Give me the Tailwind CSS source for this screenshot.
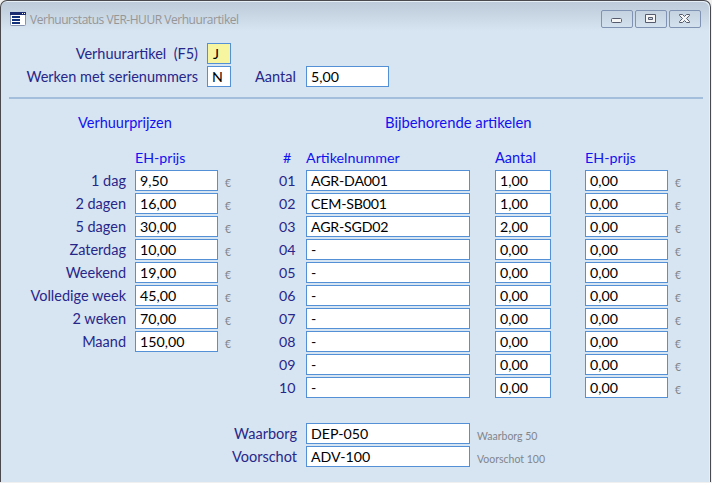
<!DOCTYPE html>
<html lang="nl">
<head>
<meta charset="utf-8">
<title>Verhuurstatus</title>
<script src="https://cdn.jsdelivr.net/npm/@tailwindcss/browser@4"></script>
</head>
<body class="w-[712px] h-[483px] overflow-hidden bg-[#f0f0f0] font-['Lato',sans-serif] text-[14.5px] leading-[21px] text-[#27278a]">
<div class="w-[711px] h-[482px] rounded-t-[7px] border border-b-0 border-[#4a4a4e] bg-[#d7e4f1] bg-linear-to-b from-[#bccad9] from-[0px] to-[#d7e4f1] to-[30px] shadow-[inset_-1px_1px_0_#e6eef6] whitespace-nowrap">
  <header class="flex h-[38px] pl-[9px] pr-[9px] pt-[9px] items-start">
    <svg class="mt-[2px]" width="16" height="14" viewBox="0 0 16 14"><rect x="0.5" y="0.5" width="15" height="13" rx="1" fill="#fff" stroke="#8792b0"/><path d="M0 0h16v3H0z" fill="#1b2c70"/><path d="M12 1h1v1h-1zM14 1h1v1h-1z" fill="#fff"/><path d="M2 4h8v2H2zM2 7h8v2H2zM2 10h8v2H2z" fill="#10307c"/></svg>
    <h1 class="ml-[4px] mt-[1px] font-['Open_Sans',sans-serif] text-[12px] leading-[18px] tracking-[-0.46px] text-[#969696]">Verhuurstatus VER-HUUR Verhuurartikel</h1>
    <div class="ml-auto flex gap-[2px]">
      <span class="w-[32px] h-[18px] rounded-[2px] border border-[#8193b3]"><svg width="30" height="16"><rect x="9.5" y="7.5" width="10" height="4" rx="1" fill="#f5f5f5" stroke="#555a6c"/></svg></span>
      <span class="w-[32px] h-[18px] rounded-[2px] border border-[#8193b3]"><svg width="30" height="16"><path fill-rule="evenodd" d="M9.5 3.5h10v8h-10zM12.5 6.500h4v2h-4z" fill="#f5f5f5" stroke="#555a6c"/></svg></span>
      <span class="w-[32px] h-[18px] rounded-[2px] border border-[#8193b3]"><svg width="30" height="16"><path d="M9.500 3.500h3l2 2 2-2h3v1l-3 3 3 3v1h-3l-2-2-2 2h-3v-1l3-3-3-3z" fill="#f5f5f5" stroke="#555a6c"/></svg></span>
    </div>
  </header>

  <section class="mt-[4px] h-[54px] ml-[8px] mr-[7px] border-b-2 border-[#a3bddc] box-content">
    <div class="flex h-[23px]"><span class="w-[189px] text-right whitespace-pre">Verhuurartikel  (F5)</span><span class="ml-[9px] w-[24px] h-[21px] border border-[#5390d6] bg-[#f8f5a0] pl-[5px] text-[14.2px] leading-[20px] text-black">J</span></div>
    <div class="flex h-[23px]"><span class="w-[189px] text-right">Werken met serienummers</span><span class="ml-[9px] w-[24px] h-[21px] border border-[#5390d6] bg-white pl-[4px] text-[14.2px] leading-[20px] text-black">N</span><span class="ml-[24px]">Aantal</span><span class="ml-auto mr-[314px] w-[83px] h-[21px] border border-[#5390d6] bg-white pl-[4px] text-[14.2px] leading-[20px] text-black">5,00</span></div>
  </section>

  <div class="flex mt-[13px] h-[35px] text-[#1212f0]"><h2 class="ml-[77px] w-[307px]">Verhuurprijzen</h2><h2 class="text-[14.8px]">Bijbehorende artikelen</h2></div>
  <main class="flex">
    <section class="w-[264px]">
      <div class="h-[23px] pl-[134px] text-[14.2px] text-[#1212f0]">EH-prijs</div>
      <div id="prices"></div>
    </section>
    <section>
      <div class="grid grid-cols-[41px_189px_90px_90px] h-[23px] text-[14.3px] text-[#1212f0]"><span class="pl-[18px]">#</span><span>Artikelnummer</span><span class="text-[14.5px]">Aantal</span><span>EH-prijs</span></div>
      <div id="articles"></div>
    </section>
  </main>
  <footer class="mt-[23px] ml-[219px]">
    <div class="flex h-[23px]"><span class="w-[77px] text-right">Waarborg</span><span class="ml-[9px] w-[164px] h-[21px] border border-[#5390d6] bg-white pl-[4px] text-[14.2px] leading-[20px] text-black">DEP-050</span><span class="ml-[7px] pt-[3px] text-[10.5px] text-[#82868c]">Waarborg 50</span></div>
    <div class="flex h-[23px]"><span class="w-[77px] text-right">Voorschot</span><span class="ml-[9px] w-[164px] h-[21px] border border-[#5390d6] bg-white pl-[4px] text-[14.2px] leading-[20px] text-black">ADV-100</span><span class="ml-[7px] pt-[3px] text-[10.5px] text-[#82868c]">Voorschot 100</span></div>
  </footer>
</div>
<script>
const field = (w, t) => `<span class="${w} h-[21px] border border-[#5390d6] bg-white pl-[4px] text-[14.2px] leading-[20px] text-black">${t}</span>`;
const euro = '<span class="ml-[7px] pt-[3px] text-[10.5px] text-[#82868c]">€</span>';
document.getElementById('prices').innerHTML = [['1 dag','9,50'],['2 dagen','16,00'],['5 dagen','30,00'],['Zaterdag','10,00'],['Weekend','19,00'],['Volledige week','45,00'],['2 weken','70,00'],['Maand','150,00']]
  .map(([l, v]) => `<div class="flex h-[23px]"><span class="w-[125px] text-right mr-[9px]">${l}</span>${field('w-[83px]', v)}${euro}</div>`).join('');
document.getElementById('articles').innerHTML = [['AGR-DA001','1,00'],['CEM-SB001','1,00'],['AGR-SGD02','2,00'],...Array(7).fill(['-','0,00'])]
  .map(([a, n], i) => `<div class="flex h-[23px]"><span class="w-[41px] pl-[14px] text-[14.2px]">${String(i + 1).padStart(2, '0')}</span>${field('w-[164px] mr-[25px] tracking-[-0.2px]', a)}${field('w-[56px] mr-[34px]', n)}${field('w-[83px]', '0,00')}${euro}</div>`).join('');
</script>
</body>
</html>
